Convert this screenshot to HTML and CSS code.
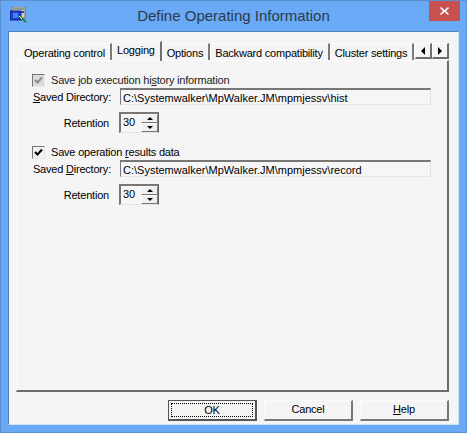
FILE: index.html
```html
<!DOCTYPE html>
<html lang="en">
<head>
  <meta charset="UTF-8">
  <title>Define Operating Information</title>
  <link rel="stylesheet" href="styles.css">
</head>
<body>

<div class="window">
  <div class="titlebar">
    <svg class="app-icon" width="17" height="16" viewBox="0 0 17 16">
      <rect x="2" y="0" width="13" height="11" fill="#d8d4c4" stroke="#77756a"/>
      <rect x="3" y="1" width="11" height="2" fill="#8a9a8c"/>
      <rect x="0" y="4" width="11" height="9" fill="#1a3fd0" stroke="#10208a"/>
      <rect x="3" y="6" width="5" height="5" fill="#3f86f0"/>
      <rect x="11" y="4" width="3" height="2" fill="#2040c0"/>
      <path d="M9 9l7 6" stroke="#1e8a2c" stroke-width="2.2"/>
      <path d="M9 9l3 3" stroke="#e8f0c0" stroke-width="1"/>
    </svg>
    <div class="title">Define Operating Information</div>
    <div class="close">
      <svg width="9" height="8" viewBox="0 0 9 8"><path d="M1 0l3.500 3 3.500-3 1 1-3 3 3 3-1 1-3.500-3-3.500 3-1-1 3-3-3-3z" fill="#fff"/></svg>
    </div>
  </div>

  <div class="client">
    <div class="tabstrip">
      <div class="tab">Operating control</div>
      <div class="tab active">Logging</div>
      <div class="tab">Options</div>
      <div class="tab">Backward compatibility</div>
      <div class="tab">Cluster settings</div>
      <div class="tab-scroll">
        <div class="scroll-btn"><span class="arrow-left"></span></div>
        <div class="scroll-btn"><span class="arrow-right"></span></div>
      </div>
    </div>

    <div class="panel">
      <div class="group">
        <div class="check-row disabled">
          <span class="checkbox"><svg width="9" height="9" viewBox="0 0 9 9"><path d="M1 4l2.500 2.500L8 1.500" fill="none" stroke="#8c8c8c" stroke-width="2"/></svg></span>
          <span>Save job execution hi<u>s</u>tory information</span>
        </div>
        <div class="dir-row">
          <span class="dir-label"><u>S</u>aved Directory:</span>
          <div class="textbox">C:\Systemwalker\MpWalker.JM\mpmjessv\hist</div>
        </div>
        <div class="ret-row">
          <span class="ret-label">Retention</span>
          <div class="spin">
            <div class="spin-value">30</div>
            <div class="spin-btns">
              <div class="spin-btn"><span class="arrow-up"></span></div>
              <div class="spin-btn"><span class="arrow-down"></span></div>
            </div>
          </div>
        </div>
      </div>

      <div class="group">
        <div class="check-row">
          <span class="checkbox"><svg width="9" height="9" viewBox="0 0 9 9"><path d="M1 4l2.500 2.500L8 1.500" fill="none" stroke="#000" stroke-width="2"/></svg></span>
          <span>Save operation <u>r</u>esults data</span>
        </div>
        <div class="dir-row">
          <span class="dir-label">Saved <u>D</u>irectory:</span>
          <div class="textbox">C:\Systemwalker\MpWalker.JM\mpmjessv\record</div>
        </div>
        <div class="ret-row">
          <span class="ret-label">Retention</span>
          <div class="spin">
            <div class="spin-value">30</div>
            <div class="spin-btns">
              <div class="spin-btn"><span class="arrow-up"></span></div>
              <div class="spin-btn"><span class="arrow-down"></span></div>
            </div>
          </div>
        </div>
      </div>
    </div>

    <div class="buttons">
      <div class="btn default"><span class="focus-ring">OK</span></div>
      <div class="btn">Cancel</div>
      <div class="btn"><span><u>H</u>elp</span></div>
    </div>
  </div>
</div>

</body>
</html>
```

FILE: styles.css
```css
:root {
  --frame: #69a9f5;
  --dither: repeating-conic-gradient(#eeeeee 0% 25%, #fbfbfb 0% 50%) 0 0 / 2px 2px;
}

html, body {
  margin: 0;
  height: 100%;
}

body {
  font-family: "Liberation Sans", Arial, sans-serif;
  font-size: 11px;
  letter-spacing: -0.2px;
  color: #000;
  overflow: hidden;
}

.window {
  box-sizing: border-box;
  width: 467px;
  height: 433px;
  background: var(--frame);
  border: 1px solid #5a8fd0;
  padding: 0 7px 7px;
  display: flex;
  flex-direction: column;
}

.titlebar {
  height: 30px;
  display: flex;
  align-items: flex-start;
  position: relative;
  flex: none;
}
.app-icon {
  margin: 6px 0 0 2px;
}
.title {
  position: absolute;
  left: 0;
  right: 0;
  top: 5px;
  text-align: center;
  font-size: 15px;
  letter-spacing: 0;
  line-height: 20px;
  color: #2b3a4a;
}
.close {
  position: absolute;
  right: -1px;
  top: 0;
  width: 31px;
  height: 20px;
  background: #c75050;
  display: flex;
  align-items: center;
  justify-content: center;
}

.client {
  flex: 1;
  background: var(--dither);
  border: 1px solid #4f7fb8;
  border-right-color: #cfe0f5;
  border-bottom-color: #cfe0f5;
  padding: 9px 9px 0 7px;
  display: flex;
  flex-direction: column;
  min-height: 0;
}

.tabstrip {
  display: flex;
  align-items: flex-end;
  height: 19px;
  padding-left: 3px;
  position: relative;
  z-index: 1;
  flex: none;
}
.tab {
  height: 17px;
  line-height: 18px;
  padding: 0 5px 0 4px;
  box-sizing: border-box;
  border-top: 1px solid #fbfbfb;
  border-left: 1px solid #fbfbfb;
  border-right: 2px solid #7a7a7a;
  white-space: nowrap;
}
.tab.active {
  height: 20px;
  line-height: 17px;
  margin-bottom: -1px;
  padding: 0 5px 0 4px;
  border-right-color: #6e6e6e;
}
.tab-scroll {
  display: flex;
  position: absolute;
  right: 0;
  top: 2px;
}
.scroll-btn {
  width: 17px;
  height: 16px;
  box-sizing: border-box;
  border: 1px solid #fbfbfb;
  border-right: 2px solid #6e6e6e;
  border-bottom: 2px solid #6e6e6e;
  display: flex;
  align-items: center;
  justify-content: center;
}
.arrow-left, .arrow-right {
  width: 0;
  height: 0;
  border-top: 4px solid transparent;
  border-bottom: 4px solid transparent;
}
.arrow-left { border-right: 4px solid #000; }
.arrow-right { border-left: 4px solid #000; }

.panel {
  flex: none;
  height: 332px;
  box-sizing: border-box;
  border-top: 1px solid #fbfbfb;
  border-left: 1px solid #fbfbfb;
  border-right: 2px solid #6e6e6e;
  border-bottom: 2px solid #6e6e6e;
  padding: 11px 0 0 15px;
}

.group {
  margin-bottom: 11px;
}
.check-row {
  display: flex;
  align-items: center;
  gap: 6px;
  height: 16px;
}
.check-row.disabled { color: #222; }
.checkbox {
  width: 13px;
  height: 13px;
  box-sizing: border-box;
  border: 1px solid #777;
  border-right-color: #e8e8e8;
  border-bottom-color: #e8e8e8;
  background: #f2f2f2;
  display: flex;
  align-items: center;
  justify-content: center;
}
.check-row.disabled .checkbox { background: #dcdcdc; }

.dir-row {
  display: flex;
  align-items: center;
  height: 17px;
}
.dir-label {
  width: 79px;
  text-align: right;
  flex: none;
  white-space: nowrap;
}
.textbox {
  margin-left: 9px;
  width: 311px;
  height: 17px;
  line-height: 16px;
  box-sizing: border-box;
  padding-left: 2px;
  letter-spacing: 0;
  border-top: 2px solid #777;
  border-left: 1px solid #777;
  border-right: 1px solid #e4e4e4;
  border-bottom: 1px solid #e4e4e4;
  background: #f6f6f6;
  white-space: nowrap;
}

.ret-row {
  display: flex;
  align-items: center;
  margin-top: 7px;
  height: 21px;
}
.ret-label {
  width: 77px;
  text-align: right;
  flex: none;
}
.spin {
  margin-left: 10px;
  width: 40px;
  height: 21px;
  box-sizing: border-box;
  border-top: 2px solid #777;
  border-left: 2px solid #777;
  border-right: 1px solid #666;
  border-bottom: 1px solid #e4e4e4;
  display: flex;
  background: #f6f6f6;
}
.spin-value {
  flex: 1;
  line-height: 17px;
  padding-left: 2px;
  letter-spacing: 0;
}
.spin-btns {
  width: 17px;
  display: flex;
  flex-direction: column;
}
.spin-btn {
  flex: 1;
  box-sizing: border-box;
  border: 1px solid #fbfbfb;
  border-right-color: #777;
  border-bottom-color: #777;
  background: #f0f0f0;
  display: flex;
  align-items: center;
  justify-content: center;
}
.arrow-up, .arrow-down {
  width: 0;
  height: 0;
  border-left: 3px solid transparent;
  border-right: 3px solid transparent;
}
.arrow-up { border-bottom: 3px solid #000; }
.arrow-down { border-top: 3px solid #000; }

.buttons {
  display: flex;
  justify-content: flex-end;
  gap: 7px;
  margin-top: 8px;
}
.btn {
  width: 89px;
  height: 21px;
  box-sizing: border-box;
  padding-bottom: 2px;
  border-top: 1px solid #fbfbfb;
  border-left: 1px solid #fbfbfb;
  border-right: 2px solid #777;
  border-bottom: 2px solid #777;
  display: flex;
  align-items: center;
  justify-content: center;
}
.btn.default {
  border: 1px solid #555;
  border-right: 2px solid #555;
  border-bottom: 2px solid #555;
  padding: 2px;
}
.focus-ring {
  flex: 1;
  align-self: stretch;
  text-align: center;
  line-height: 12px;
  border: 1px dotted #000;
}
```
